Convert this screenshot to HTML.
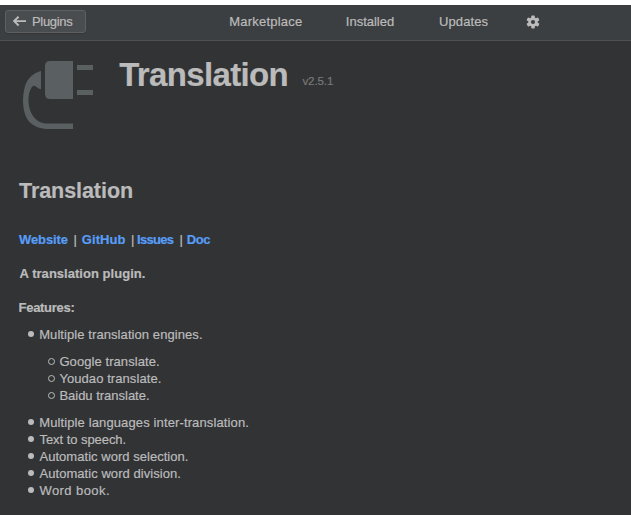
<!DOCTYPE html>
<html><head><meta charset="utf-8">
<style>
html,body{margin:0;padding:0;}
body{width:631px;height:515px;overflow:hidden;position:relative;background:#313335;font-family:"Liberation Sans",sans-serif;color:#BBBBBB;}
.abs{position:absolute;white-space:nowrap;line-height:1;-webkit-text-stroke:0.2px currentColor;}
#top{position:absolute;left:0;top:0;width:631px;height:5px;background:#ffffff;}
#bar{position:absolute;left:0;top:5px;width:631px;height:35px;background:#3C3F41;}
#barline{position:absolute;left:0;top:40px;width:631px;height:1px;background:#4F5152;}
#btn{position:absolute;left:5px;top:10px;width:79px;height:21px;border:1px solid #5E6060;border-radius:3px;background:#4A4D4F;box-shadow:0 1px 1px rgba(0,0,0,0.15);}
.link{color:#589DF6;}
.bul{position:absolute;width:6px;height:6px;border-radius:50%;background:#BBBBBB;}
.circ{position:absolute;width:5px;height:5px;border-radius:50%;border:1.2px solid #BBBBBB;box-sizing:content-box;}
</style></head>
<body>
<div id="top"></div>
<div id="bar"></div>
<div id="barline"></div>
<div id="btn"></div>
<svg class="abs" style="left:13px;top:15px" width="15" height="12" viewBox="0 0 15 12">
  <path d="M5.6 1.7 L1.1 6.1 L5.6 10.5 M1.1 6.1 H13" fill="none" stroke="#BBBBBB" stroke-width="1.9"/>
</svg>
<svg class="abs" style="left:520px;top:9px" width="26" height="26" viewBox="0 0 26 26">
  <g fill="#BBBBBB" transform="translate(13 13)">
    <circle r="4.7"/>
    <rect x="-1.8" y="-6.6" width="3.6" height="13.2" rx="1"/>
    <rect x="-1.8" y="-6.6" width="3.6" height="13.2" rx="1" transform="rotate(60)"/>
    <rect x="-1.8" y="-6.6" width="3.6" height="13.2" rx="1" transform="rotate(-60)"/>
    <circle r="2.1" fill="#3C3F41"/>
  </g>
</svg>
<svg class="abs" style="left:0;top:0" width="110" height="140" viewBox="0 0 110 140">
  <g fill="#5A5F62">
    <path d="M50 61 H73 V99 H50 Q45 99 45 94 V66 Q45 61 50 61 Z"/>
    <rect x="77" y="65" width="16" height="5"/>
    <rect x="77" y="90" width="16" height="5"/>
    <path d="M41 71 C35 72.5 27 77 24.5 88 C23.5 92 23 96 23 100 C23 119 31 129 49.5 129 H73 V123.5 H47 C36 123.5 28.5 113 28.5 100 C28.5 94 30 88.5 33 86 C35.5 84.5 37 88.4 41 89.3 Z"/>
  </g>
</svg>
<div class="bul" style="left:28px;top:331px"></div>
<div class="circ" style="left:48px;top:358px"></div>
<div class="circ" style="left:48px;top:375px"></div>
<div class="circ" style="left:48px;top:392px"></div>
<div class="bul" style="left:28px;top:419px"></div>
<div class="bul" style="left:28px;top:436px"></div>
<div class="bul" style="left:28px;top:453px"></div>
<div class="bul" style="left:28px;top:470px"></div>
<div class="bul" style="left:28px;top:487px"></div>
<div class="abs" id="plugins" style="left:32.00px;top:15px;font-size:13px;letter-spacing:-0.333px;">Plugins</div>
<div class="abs" id="market" style="left:229.20px;top:15px;font-size:13px;letter-spacing:0.220px;">Marketplace</div>
<div class="abs" id="installed" style="left:345.80px;top:15px;font-size:13px;letter-spacing:-0.001px;">Installed</div>
<div class="abs" id="updates" style="left:439.00px;top:15px;font-size:13px;letter-spacing:0.100px;">Updates</div>
<div class="abs" id="title" style="left:119.20px;top:58px;font-size:33px;font-weight:bold;letter-spacing:-0.650px;">Translation</div>
<div class="abs" id="ver" style="left:302.40px;top:75px;font-size:11.6px;color:#787878;letter-spacing:-0.120px;">v2.5.1</div>
<div class="abs" id="h2" style="left:19.00px;top:181px;font-size:21.5px;font-weight:bold;letter-spacing:-0.060px;">Translation</div>
<div class="abs" id="website" style="left:19.00px;top:233px;font-size:13px;font-weight:bold;letter-spacing:-0.099px;"><span class=link>Website</span></div>
<div class="abs" id="p1" style="left:73.50px;top:233px;font-size:13px;">|</div>
<div class="abs" id="github" style="left:81.80px;top:233px;font-size:13px;font-weight:bold;letter-spacing:0.080px;"><span class=link>GitHub</span></div>
<div class="abs" id="p2" style="left:131.00px;top:233px;font-size:13px;">|</div>
<div class="abs" id="issues" style="left:137.00px;top:233px;font-size:13px;font-weight:bold;letter-spacing:-0.720px;"><span class=link>Issues</span></div>
<div class="abs" id="p3" style="left:179.50px;top:233px;font-size:13px;">|</div>
<div class="abs" id="doc" style="left:186.80px;top:233px;font-size:13px;font-weight:bold;letter-spacing:-0.500px;"><span class=link>Doc</span></div>
<div class="abs" id="desc" style="left:19.60px;top:267px;font-size:13px;font-weight:bold;letter-spacing:0.030px;">A translation plugin.</div>
<div class="abs" id="feat" style="left:18.60px;top:301px;font-size:13px;font-weight:bold;letter-spacing:-0.300px;">Features:</div>
<div class="abs" id="l1" style="left:39.20px;top:328px;font-size:13px;letter-spacing:0.079px;">Multiple translation engines.</div>
<div class="abs" id="g1" style="left:59.40px;top:355px;font-size:13px;letter-spacing:0.075px;">Google translate.</div>
<div class="abs" id="g2" style="left:59.40px;top:372px;font-size:13px;letter-spacing:0.075px;">Youdao translate.</div>
<div class="abs" id="g3" style="left:59.40px;top:389px;font-size:13px;letter-spacing:-0.013px;">Baidu translate.</div>
<div class="abs" id="l2" style="left:39.20px;top:416px;font-size:13px;letter-spacing:0.123px;">Multiple languages inter-translation.</div>
<div class="abs" id="l3" style="left:39.50px;top:433px;font-size:13px;letter-spacing:-0.058px;">Text to speech.</div>
<div class="abs" id="l4" style="left:39.50px;top:450px;font-size:13px;letter-spacing:0.033px;">Automatic word selection.</div>
<div class="abs" id="l5" style="left:39.50px;top:467px;font-size:13px;letter-spacing:0.052px;">Automatic word division.</div>
<div class="abs" id="l6" style="left:39.50px;top:484px;font-size:13px;letter-spacing:0.423px;">Word book.</div>
</body></html>
